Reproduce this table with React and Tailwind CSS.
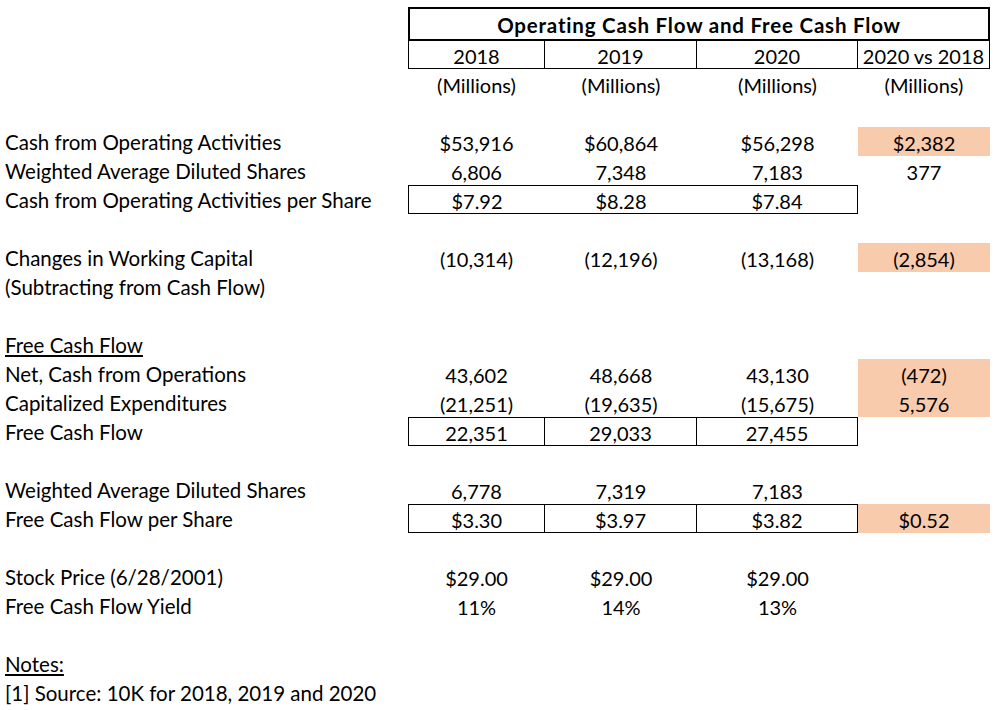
const cols = 'grid grid-cols-[408px_137px_152px_161px_132px] h-[29px] items-stretch';

const Cell = ({ children, className = '' }) => (
  <div className={`flex items-center justify-center pt-[2px] ${className}`}>{children}</div>
);

const Label = ({ children, className = '' }) => (
  <div className={`flex items-center pl-[5px] pt-[2px] whitespace-nowrap ${className}`}>{children}</div>
);

const Row = ({ label, values = [], fill, boxed, split, labelClass = '' }) => {
  // boxed: outline around the three year cells; split: inner dividers too
  const border = (i) => {
    if (!boxed) return '';
    let c = 'border-y border-black';
    if (i === 0) c += ' border-l';
    if (i === 2) c += ' border-r';
    if (split && i < 2) c += ' border-r';
    return c;
  };
  return (
    <div className={cols}>
      <Label className={labelClass}>{label}</Label>
      {[0, 1, 2].map(i => (
        <Cell key={i} className={`text-[20px] ${border(i)}`}>{values[i]}</Cell>
      ))}
      <Cell className={`text-[20px] ${fill ? 'bg-[#f8cbad]' : ''}`}>{values[3]}</Cell>
    </div>
  );
};

const Blank = () => <div className="h-[29px]" />;

export default function App() {
  return (
    <div className="w-[997px] h-[710px] bg-white text-black text-[20.5px] leading-none pt-[7px] font-['Lato','Liberation_Sans',sans-serif] overflow-hidden">
      <div className="grid grid-cols-[408px_582px]">
        <div />
        <div className="h-[34px] border-2 border-black flex items-center justify-center pt-[2px] font-bold tracking-[0.8px]">
          Operating Cash Flow and Free Cash Flow
        </div>
      </div>
      <div className="grid grid-cols-[408px_137px_152px_161px_132px] h-[28px] text-[20px]">
        <div />
        <Cell className="border-l border-r border-b border-black">2018</Cell>
        <Cell className="border-r border-b border-black">2019</Cell>
        <Cell className="border-r border-b border-black">2020</Cell>
        <Cell className="border-r border-b border-black">2020 vs 2018</Cell>
      </div>
      <Row values={['(Millions)', '(Millions)', '(Millions)', '(Millions)']} />
      <Blank />
      <Row label="Cash from Operating Activities" values={['$53,916', '$60,864', '$56,298', '$2,382']} fill />
      <Row label="Weighted Average Diluted Shares" values={['6,806', '7,348', '7,183', '377']} />
      <Row label="Cash from Operating Activities per Share" values={['$7.92', '$8.28', '$7.84']} boxed />
      <Blank />
      <Row label="Changes in Working Capital" values={['(10,314)', '(12,196)', '(13,168)', '(2,854)']} fill />
      <Row label="(Subtracting from Cash Flow)" />
      <Blank />
      <Row label={<span className="underline underline-offset-2">Free Cash Flow</span>} />
      <Row label="Net, Cash from Operations" values={['43,602', '48,668', '43,130', '(472)']} fill />
      <Row label="Capitalized Expenditures" values={['(21,251)', '(19,635)', '(15,675)', '5,576']} fill />
      <Row label="Free Cash Flow" values={['22,351', '29,033', '27,455']} boxed split />
      <Blank />
      <Row label="Weighted Average Diluted Shares" values={['6,778', '7,319', '7,183']} />
      <Row label="Free Cash Flow per Share" values={['$3.30', '$3.97', '$3.82', '$0.52']} boxed split fill />
      <Blank />
      <Row label="Stock Price (6/28/2001)" values={['$29.00', '$29.00', '$29.00']} />
      <Row label="Free Cash Flow Yield" values={['11%', '14%', '13%']} />
      <Blank />
      <Row label={<span className="underline underline-offset-2">Notes:</span>} />
      <Row label="[1] Source: 10K for 2018, 2019 and 2020" />
    </div>
  );
}
